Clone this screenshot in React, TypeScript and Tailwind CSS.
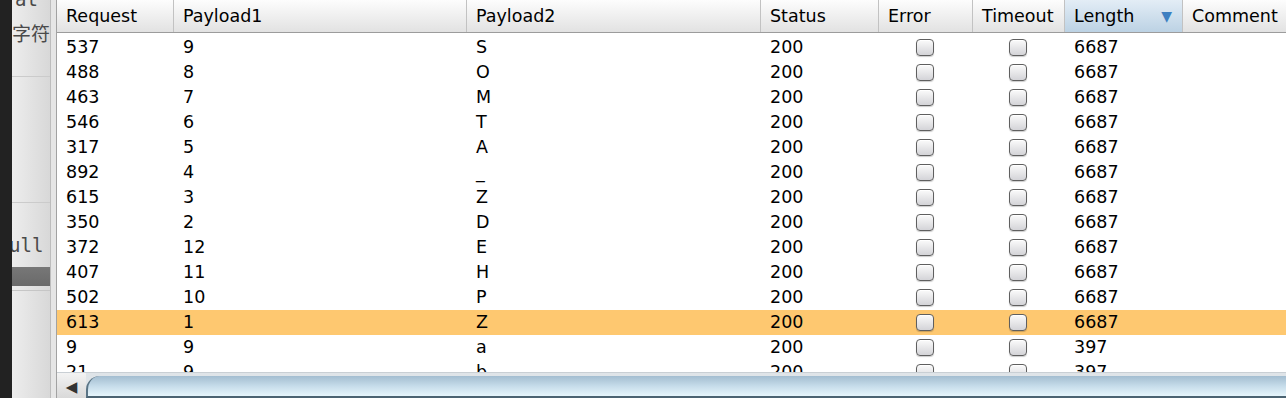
import React from "react";

type Row = { req: string; p1: string; p2: string; len: string; hot?: boolean };

const rows: Row[] = [
  { req: "537", p1: "9", p2: "S", len: "6687" },
  { req: "488", p1: "8", p2: "O", len: "6687" },
  { req: "463", p1: "7", p2: "M", len: "6687" },
  { req: "546", p1: "6", p2: "T", len: "6687" },
  { req: "317", p1: "5", p2: "A", len: "6687" },
  { req: "892", p1: "4", p2: "_", len: "6687" },
  { req: "615", p1: "3", p2: "Z", len: "6687" },
  { req: "350", p1: "2", p2: "D", len: "6687" },
  { req: "372", p1: "12", p2: "E", len: "6687" },
  { req: "407", p1: "11", p2: "H", len: "6687" },
  { req: "502", p1: "10", p2: "P", len: "6687" },
  { req: "613", p1: "1", p2: "Z", len: "6687", hot: true },
  { req: "9", p1: "9", p2: "a", len: "397" },
  { req: "21", p1: "9", p2: "b", len: "397" },
];

const cols = [
  { name: "Request", w: "w-[116px] shrink-0" },
  { name: "Payload1", w: "w-[293px] shrink-0" },
  { name: "Payload2", w: "w-[294px] shrink-0" },
  { name: "Status", w: "w-[118px] shrink-0" },
  { name: "Error", w: "w-[94px] shrink-0" },
  { name: "Timeout", w: "w-[92px] shrink-0" },
  { name: "Length", w: "w-[118px] shrink-0" },
  { name: "Comment", w: "min-w-0 flex-1 overflow-hidden" },
];

function Checkbox() {
  return (
    <div className="h-[17px] w-[18px] rounded-[4px] border border-[#5f5f5f] bg-gradient-to-b from-[#fbfbfb] to-[#d4d4d8] shadow-[inset_0_1px_0_#fff,0_1px_1px_rgba(0,0,0,0.2)]" />
  );
}

function SidePanel() {
  return (
    <div className="flex w-[38px] shrink-0 flex-col overflow-hidden bg-gradient-to-r from-[#ededed] to-[#d8d8d8] text-[#4a4a4a]">
      <div className="-mt-[11px] whitespace-nowrap pl-[3px] font-['DejaVu_Sans_Mono',monospace] text-[19px] leading-[20px]">at</div>
      <div className="mt-[12px] whitespace-nowrap font-['Noto_Sans_CJK_SC',sans-serif] text-[19px] leading-[24px]">字符</div>
      <div className="mt-[31px] h-px bg-[#cbcbcb]" />
      <div className="h-[125px]" />
      <div className="h-px bg-[#cbcbcb]" />
      <div className="mt-[32px] -ml-[3px] whitespace-nowrap font-['DejaVu_Sans_Mono',monospace] text-[19px] leading-[20px]">ull</div>
      <div className="mt-[12px] h-[19px] bg-gradient-to-b from-[#777] to-[#6a6a6a]" />
      <div className="mt-[4px] h-px bg-[#c6c6c6]" />
    </div>
  );
}

export default function App() {
  return (
    <div className="flex h-[398px] w-[1286px] overflow-hidden bg-white font-['DejaVu_Sans',sans-serif] text-[17.5px] text-black">
      <div className="w-[12px] shrink-0 bg-[#222]" />
      <SidePanel />
      <div className="w-px shrink-0 bg-[#bdbdbd]" />
      <div className="w-[5px] shrink-0 bg-[#e6e6e6]" />
      <div className="w-px shrink-0 bg-[#a2a2a2]" />

      <div className="flex min-w-0 flex-1 flex-col">
        <div className="flex h-[33px] shrink-0 border-b border-[#9c9c9c] bg-gradient-to-b from-[#fdfdfd] to-[#e2e2e2]">
          {cols.map((c, i) => (
            <div
              key={c.name}
              className={`${c.w} flex items-center justify-between pl-[9px] pr-[10px] ${i > 0 ? "border-l border-[#c2c2c2]" : ""} ${
                c.name === "Length" ? "bg-gradient-to-b from-[#e3edf6] to-[#bcd2e4]" : ""
              }`}
            >
              <span className="whitespace-nowrap">{c.name}</span>
              {c.name === "Length" && <span className="text-[14px] text-[#3d7fc1]">▼</span>}
            </div>
          ))}
        </div>

        <div className="min-h-0 flex-1 overflow-hidden pt-[2px]">
          {rows.map((r, i) => (
            <div key={i} className={`flex h-[25px] items-center ${r.hot ? "bg-[#fec870]" : ""}`}>
              <div className="w-[116px] shrink-0 pl-[9px]">{r.req}</div>
              <div className="w-[293px] shrink-0 pl-[10px]">{r.p1}</div>
              <div className="w-[294px] shrink-0 pl-[10px]">{r.p2}</div>
              <div className="w-[118px] shrink-0 pl-[10px]">200</div>
              <div className="flex w-[94px] shrink-0 justify-center">
                <Checkbox />
              </div>
              <div className="flex w-[92px] shrink-0 justify-center">
                <Checkbox />
              </div>
              <div className="w-[118px] shrink-0 pl-[10px]">{r.len}</div>
              <div className="flex-1" />
            </div>
          ))}
        </div>

        <div className="flex h-[26px] shrink-0 border-t border-[#c9cfd4] bg-[#dfe4e8]">
          <div className="flex w-[29px] items-center justify-center bg-gradient-to-b from-[#f3f3f3] to-[#d9d9d9] pt-[4px] text-[15px] text-[#333]">
            ◀
          </div>
          <div className="mt-[3px] flex-1 rounded-tl-[14px] border-l-2 border-[#5a7485] border-b-2 border-b-[#4b6372] bg-gradient-to-b from-[#a3bdd0] via-[#c6dcea] to-[#e6f5fc]" />
        </div>
      </div>
    </div>
  );
}
